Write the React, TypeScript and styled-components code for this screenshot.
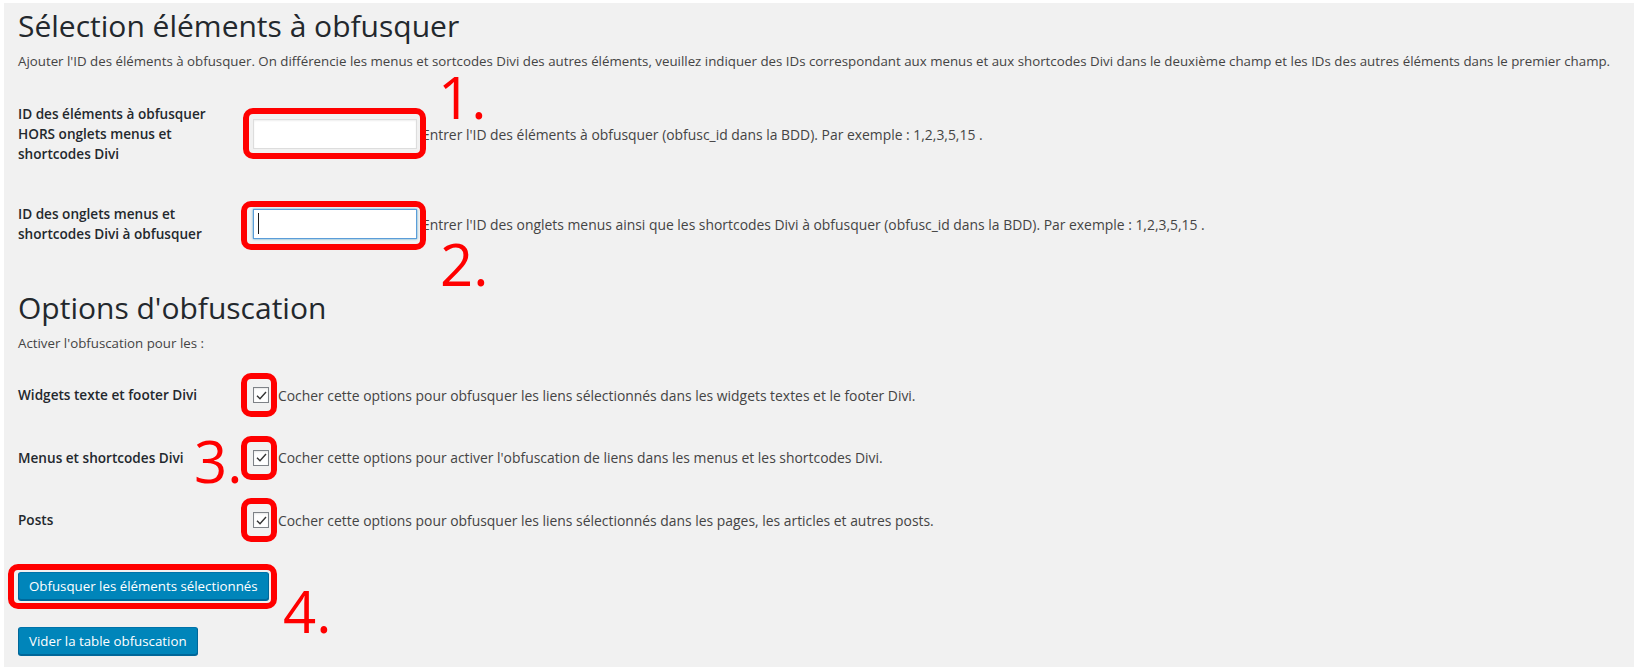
import React from "react";
import styled, { createGlobalStyle } from "styled-components";

const GlobalStyle = createGlobalStyle`
  html, body { margin: 0; padding: 0; background: #ffffff; }
  body {
    font-family: "Open Sans", "Noto Sans", sans-serif;
    color: #444444;
    -webkit-font-smoothing: antialiased;
  }
  * { box-sizing: border-box; }
`;

const Page = styled.form`
  margin: 3px 0 0 4px;
  height: 664px;
  background: #f1f1f1;
  padding: 3px 14px 0 14px;
  display: flex;
  flex-direction: column;
  align-items: flex-start;
`;

const Title = styled.h2<{ $gap?: number }>`
  margin: ${(p) => p.$gap ?? 0}px 0 0 0;
  font-size: 30px;
  line-height: 39px;
  font-weight: 400;
  color: #23282d;
`;

const Intro = styled.p`
  margin: 7px 0 0 0;
  font-size: 13.3px;
  line-height: 18px;
  color: #444444;
  white-space: nowrap;
`;

const Table = styled.div<{ $gap: number }>`
  margin-top: ${(p) => p.$gap}px;
  display: grid;
  grid-template-columns: 235px 1fr;
  width: 100%;
`;

const Th = styled.label<{ $pad: string }>`
  padding: ${(p) => p.$pad};
  max-width: 205px;
  font-size: 13.6px;
  line-height: 20px;
  font-weight: 600;
  color: #23282d;
`;

const Td = styled.div`
  display: flex;
  align-items: center;
`;

const Help = styled.span<{ $gap: number }>`
  margin-left: ${(p) => p.$gap}px;
  font-size: 13.9px;
  line-height: 19px;
  color: #444444;
  white-space: nowrap;
`;

const Annotated = styled.span`
  position: relative;
  display: inline-flex;
  flex: none;
`;

const RedFrame = styled.span<{ $t: number; $r: number; $b: number; $l: number }>`
  position: absolute;
  top: ${(p) => p.$t}px;
  right: ${(p) => p.$r}px;
  bottom: ${(p) => p.$b}px;
  left: ${(p) => p.$l}px;
  border: 6px solid #ff0000;
  border-radius: 10px;
  pointer-events: none;
`;

const Mark = styled.span<{ $x: number; $y: number }>`
  position: absolute;
  left: ${(p) => p.$x}px;
  top: ${(p) => p.$y}px;
  font-family: "Open Sans", sans-serif;
  font-size: 58px;
  line-height: 58px;
  font-weight: 400;
  color: #ff0000;
  white-space: nowrap;
  pointer-events: none;
`;

const TextInput = styled.input<{ $focused?: boolean }>`
  width: 164px;
  height: 30px;
  margin: 0;
  padding: 3px 5px;
  background: #ffffff;
  border: 1px solid ${(p) => (p.$focused ? "#5b9dd9" : "#dddddd")};
  box-shadow: ${(p) =>
    p.$focused
      ? "0 0 2px rgba(30, 140, 190, 0.8)"
      : "inset 0 1px 2px rgba(0, 0, 0, 0.07)"};
  font-family: "Open Sans", sans-serif;
  font-size: 13px;
  outline: none;
`;

const Caret = styled.span`
  position: absolute;
  left: 5px;
  top: 4px;
  width: 1px;
  height: 21px;
  background: #1a1a1a;
`;

const CheckBox = styled.span`
  width: 16px;
  height: 16px;
  display: inline-flex;
  align-items: center;
  justify-content: center;
  background: #ffffff;
  border: 1px solid #7e8287;
  box-shadow: inset 0 1px 2px rgba(0, 0, 0, 0.1);
`;

const Button = styled.button<{ $gap: number }>`
  margin-top: ${(p) => p.$gap}px;
  height: 28px;
  padding: 0 10px 1px;
  background: #0085ba;
  border: 1px solid #0073aa;
  border-color: #0073aa #006799 #006799;
  border-radius: 3px;
  box-shadow: 0 1px 0 #006799;
  color: #ffffff;
  font-family: "Open Sans", sans-serif;
  font-size: 13.3px;
  line-height: 26px;
  white-space: nowrap;
  cursor: pointer;
`;

const ButtonWrap = styled.span<{ $gap: number }>`
  position: relative;
  display: inline-flex;
  margin-top: ${(p) => p.$gap}px;
`;

const Check = () => (
  <svg width="13" height="13" viewBox="0 0 13 13">
    <polyline
      points="2,6.8 5,9.8 11,3"
      fill="none"
      stroke="#333"
      strokeWidth="1.4"
    />
  </svg>
);

type Opt = { label: string; help: string; mark?: string };

const options: Opt[] = [
  {
    label: "Widgets texte et footer Divi",
    help: "Cocher cette options pour obfusquer les liens sélectionnés dans les widgets textes et le footer Divi.",
  },
  {
    label: "Menus et shortcodes Divi",
    help: "Cocher cette options pour activer l'obfuscation de liens dans les menus et les shortcodes Divi.",
    mark: "3.",
  },
  {
    label: "Posts",
    help: "Cocher cette options pour obfusquer les liens sélectionnés dans les pages, les articles et autres posts.",
  },
];

export default function App() {
  return (
    <>
      <GlobalStyle />
      <Page onSubmit={(e) => e.preventDefault()}>
        <Title>Sélection éléments à obfusquer</Title>
        <Intro>
          Ajouter l'ID des éléments à obfusquer. On différencie les menus et sortcodes Divi des
          autres éléments, veuillez indiquer des IDs correspondant aux menus et aux shortcodes Divi
          dans le deuxième champ et les IDs des autres éléments dans le premier champ.
        </Intro>

        <Table $gap={14}>
          <Th $pad="20px 0">ID des éléments à obfusquer HORS onglets menus et shortcodes Divi</Th>
          <Td>
            <Annotated>
              <TextInput type="text" />
              <RedFrame $t={-11} $r={-9} $b={-10} $l={-10} />
              <Mark $x={185} $y={-51}>1.</Mark>
            </Annotated>
            <Help $gap={5}>
              Entrer l'ID des éléments à obfusquer (obfusc_id dans la BDD). Par exemple : 1,2,3,5,15 .
            </Help>
          </Td>

          <Th $pad="20px 0">ID des onglets menus et shortcodes Divi à obfusquer</Th>
          <Td>
            <Annotated>
              <TextInput type="text" $focused />
              <Caret />
              <RedFrame $t={-8} $r={-9} $b={-11} $l={-12} />
              <Mark $x={187} $y={26}>2.</Mark>
            </Annotated>
            <Help $gap={5}>
              Entrer l'ID des onglets menus ainsi que les shortcodes Divi à obfusquer (obfusc_id dans
              la BDD). Par exemple : 1,2,3,5,15 .
            </Help>
          </Td>
        </Table>

        <Title $gap={24}>Options d'obfuscation</Title>
        <Intro>Activer l'obfuscation pour les :</Intro>

        <Table $gap={12}>
          {options.map((o) => (
            <React.Fragment key={o.label}>
              <Th $pad="21px 0 21.5px">{o.label}</Th>
              <Td>
                <Annotated>
                  <CheckBox>
                    <Check />
                  </CheckBox>
                  <RedFrame $t={-14} $r={-8} $b={-14} $l={-12} />
                  {o.mark && (
                    <Mark $x={-59} $y={-18}>
                      {o.mark}
                    </Mark>
                  )}
                </Annotated>
                <Help $gap={9}>{o.help}</Help>
              </Td>
            </React.Fragment>
          ))}
        </Table>

        <ButtonWrap $gap={20}>
          <Button type="submit" $gap={0}>
            Obfusquer les éléments sélectionnés
          </Button>
          <RedFrame $t={-8} $r={-8} $b={-9} $l={-10} />
          <Mark $x={265} $y={10}>4.</Mark>
        </ButtonWrap>

        <Button type="button" $gap={27}>
          Vider la table obfuscation
        </Button>
      </Page>
    </>
  );
}
